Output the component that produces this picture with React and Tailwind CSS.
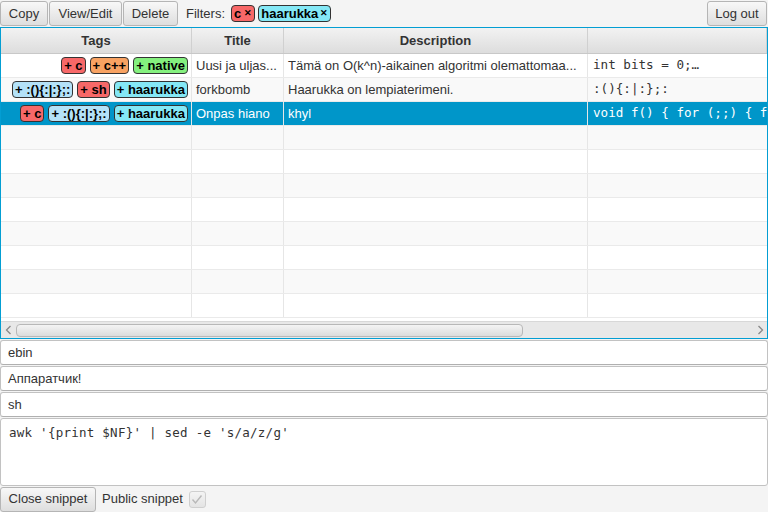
import React from "react";

const sans = { fontFamily: '"Liberation Sans", Arial, sans-serif' };
const mono = { fontFamily: '"DejaVu Sans Mono", monospace' };

const chipColors = {
  red: "bg-[#f76868]",
  orange: "bg-[#f8a262]",
  green: "bg-[#84f07e]",
  blue: "bg-[#b4e2f8]",
  cyan: "bg-[#84e8f6]",
};

const Chip = ({ color, children }) => (
  <span
    className={`${chipColors[color]} inline-flex items-center h-[17px] px-[2px] rounded-[4px] border border-[#333] text-[13px] font-bold text-black leading-none whitespace-nowrap`}
  >
    {children}
  </span>
);

const rows = [
  {
    tags: [
      ["red", "+ c"],
      ["orange", "+ c++"],
      ["green", "+ native"],
    ],
    title: "Uusi ja uljas...",
    desc: "Tämä on O(k^n)-aikainen algoritmi olemattomaa...",
    code: "int bits = 0;…",
  },
  {
    tags: [
      ["blue", "+ :(){:|:};:"],
      ["red", "+ sh"],
      ["cyan", "+ haarukka"],
    ],
    title: "forkbomb",
    desc: "Haarukka on lempiaterimeni.",
    code: ":(){:|:};:",
  },
  {
    tags: [
      ["red", "+ c"],
      ["blue", "+ :(){:|:};:"],
      ["cyan", "+ haarukka"],
    ],
    title: "Onpas hiano",
    desc: "khyl",
    code: "void f() { for (;;) { f",
    selected: true,
  },
];

const cols = "grid grid-cols-[191px_92px_304px_1fr]";

const ToolButton = ({ children, className = "" }) => (
  <button
    className={`h-[25px] px-[6px] rounded-[3px] border border-[#b5b5b5] bg-gradient-to-b from-[#f8f8f8] to-[#dedede] text-[13px] text-[#333] whitespace-nowrap ${className}`}
  >
    {children}
  </button>
);

const Field = ({ children }) => (
  <div className="h-[25px] mb-[1px] rounded-[3px] border border-[#c2c2c2] border-b-[#b0b0b0] bg-white flex items-center px-[7px] text-[13px] text-[#333]">
    {children}
  </div>
);

export default function App() {
  return (
    <div
      className="w-[768px] h-[512px] bg-[#f4f4f4] flex flex-col overflow-hidden"
      style={sans}
    >
      {/* toolbar */}
      <div className="h-[27px] flex items-center pl-0 pr-[1px] gap-[1px]">
        <ToolButton className="w-[48px]">Copy</ToolButton>
        <ToolButton className="w-[73px]">View/Edit</ToolButton>
        <ToolButton className="w-[55px]">Delete</ToolButton>
        <span className="ml-[7px] text-[13px] text-[#333]">Filters:</span>
        <span className="ml-[5px] flex gap-[3px]">
          <span className="inline-flex items-center h-[17px] px-[2px] rounded-[4px] border border-[#333] bg-[#f76868] text-[13px] font-bold leading-none">
            c<span className="ml-[3px] text-[9px]">✕</span>
          </span>
          <span className="inline-flex items-center h-[17px] px-[2px] rounded-[4px] border border-[#333] bg-[#84e8f6] text-[13px] font-bold leading-none">
            haarukka<span className="ml-[2px] text-[9px]">✕</span>
          </span>
        </span>
        <div className="flex-1" />
        <ToolButton className="w-[60px]">Log out</ToolButton>
      </div>

      {/* table */}
      <div className="h-[313px] border border-[#039ed3] flex flex-col bg-white">
        <div
          className={`${cols} h-[26px] bg-gradient-to-b from-[#f2f2f2] to-[#dddddd] border-b border-[#c8c8c8] text-[13px] font-bold text-[#333]`}
        >
          {["Tags", "Title", "Description", ""].map((h, i) => (
            <div
              key={i}
              className="flex items-center justify-center border-r border-[#d0d0d0]"
            >
              {h}
            </div>
          ))}
        </div>
        <div className="flex-1 overflow-hidden">
          {rows.map((r, i) => (
            <div
              key={i}
              className={`${cols} h-[24px] text-[13px] ${
                r.selected
                  ? "bg-[#0096c9] text-white"
                  : i % 2
                  ? "bg-[#f9f9f9] text-[#333]"
                  : "bg-white text-[#333]"
              } border-b border-[#eaeaea]`}
            >
              <div className="flex items-center justify-end gap-[4px] pr-[3px] border-r border-[#e6e6e6]">
                {r.tags.map(([c, t], j) => (
                  <Chip key={j} color={c}>
                    {t}
                  </Chip>
                ))}
              </div>
              <div className="flex items-center px-[4px] border-r border-[#e6e6e6] whitespace-nowrap overflow-hidden">
                {r.title}
              </div>
              <div className="flex items-center px-[4px] border-r border-[#e6e6e6] whitespace-nowrap overflow-hidden">
                {r.desc}
              </div>
              <div
                className="flex items-center px-[5px] text-[12.6px] whitespace-nowrap overflow-hidden"
                style={mono}
              >
                {r.code}
              </div>
            </div>
          ))}
          {Array.from({ length: 8 }).map((_, i) => (
            <div
              key={"e" + i}
              className={`${cols} h-[24px] border-b border-[#eaeaea] ${
                i % 2 ? "bg-white" : "bg-[#f9f9f9]"
              }`}
            >
              <div className="border-r border-[#e6e6e6]" />
              <div className="border-r border-[#e6e6e6]" />
              <div className="border-r border-[#e6e6e6]" />
              <div />
            </div>
          ))}
        </div>
        {/* horizontal scrollbar */}
        <div className="h-[17px] bg-[#e8e8e8] border-t border-[#d8d8d8] flex items-center">
          <span className="w-[14px] flex justify-center">
            <svg width="7" height="10" viewBox="0 0 7 10">
              <path d="M5.5 1 L1.5 5 L5.5 9" fill="none" stroke="#888" strokeWidth="1.3" />
            </svg>
          </span>
          <div className="ml-[1px] w-[507px] h-[13px] rounded-[4px] border border-[#b8b8b8] bg-gradient-to-b from-[#f4f4f4] to-[#dcdcdc]" />
          <div className="flex-1" />
          <span className="w-[14px] flex justify-center">
            <svg width="7" height="10" viewBox="0 0 7 10">
              <path d="M1.5 1 L5.5 5 L1.5 9" fill="none" stroke="#888" strokeWidth="1.3" />
            </svg>
          </span>
        </div>
      </div>

      {/* form */}
      <div className="mt-[1px]">
        <Field>ebin</Field>
        <Field>Аппаратчик!</Field>
        <Field>sh</Field>
        <div
          className="h-[68px] rounded-[3px] border border-[#c2c2c2] bg-white px-[8px] pt-[5px] text-[12.5px] tracking-[0.25px] text-[#333]"
          style={mono}
        >
          awk '{"{"}print $NF{"}"}' | sed -e 's/a/z/g'
        </div>
      </div>

      {/* bottom bar */}
      <div className="flex items-center h-[26px] gap-[6px]">
        <ToolButton className="w-[96px] h-[24px]">Close snippet</ToolButton>
        <span className="text-[13px] text-[#333]">Public snippet</span>
        <span className="w-[17px] h-[17px] rounded-[3px] border border-[#cfcfcf] bg-gradient-to-b from-[#f4f4f4] to-[#e4e4e4] flex items-center justify-center">
          <svg width="12" height="11" viewBox="0 0 12 11">
            <path d="M1.5 5.5 L4.5 9 L10.5 1.5" fill="none" stroke="#b8b8b8" strokeWidth="1.4" />
          </svg>
        </span>
      </div>
    </div>
  );
}
